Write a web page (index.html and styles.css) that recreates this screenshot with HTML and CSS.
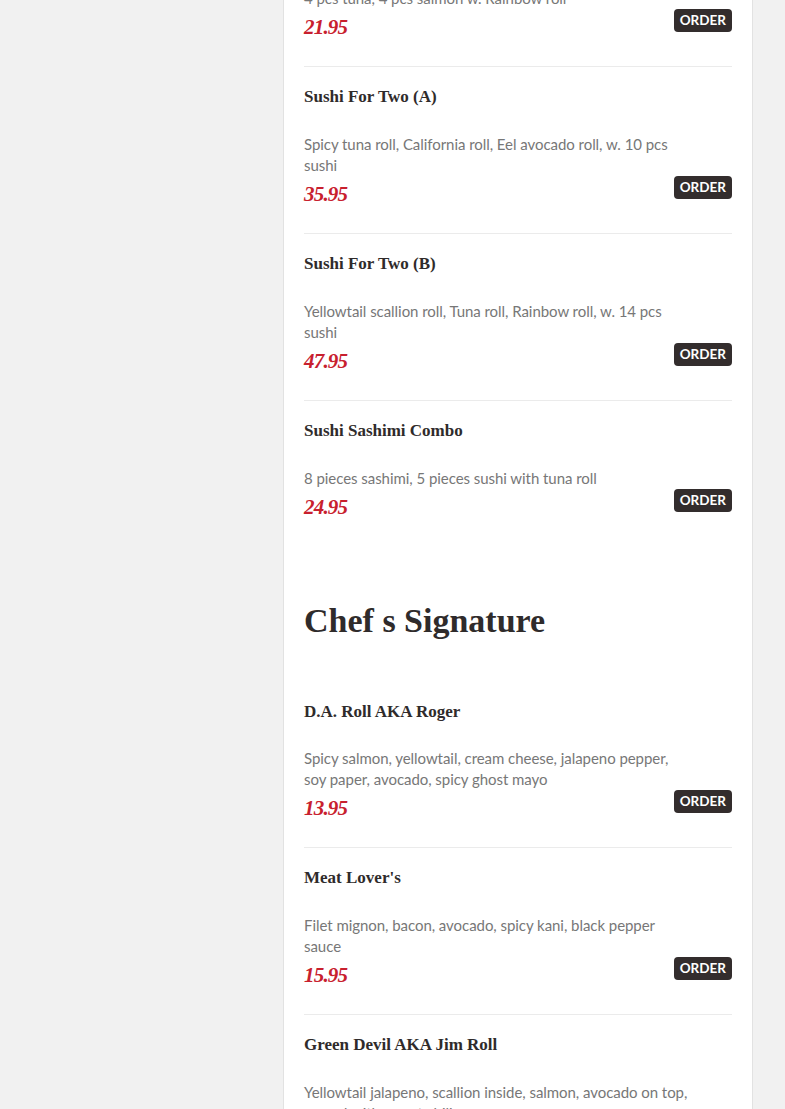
FILE: index.html
```html
<!DOCTYPE html>
<html lang="en">
<head>
<meta charset="utf-8">
<title>Menu</title>
<link rel="stylesheet" href="styles.css">
</head>
<body>
<div class="layout">
  <aside class="sidebar"></aside>
  <main class="card">
    <section class="section">
      <div class="item">
        <p class="desc">4 pcs tuna, 4 pcs salmon w. Rainbow roll</p>
        <div class="price-row"><span class="price">21.95</span><button class="order">ORDER</button></div>
      </div>
      <div class="item">
        <h3 class="title">Sushi For Two (A)</h3>
        <p class="desc">Spicy tuna roll, California roll, Eel avocado roll, w. 10 pcs sushi</p>
        <div class="price-row"><span class="price">35.95</span><button class="order">ORDER</button></div>
      </div>
      <div class="item">
        <h3 class="title">Sushi For Two (B)</h3>
        <p class="desc">Yellowtail scallion roll, Tuna roll, Rainbow roll, w. 14 pcs sushi</p>
        <div class="price-row"><span class="price">47.95</span><button class="order">ORDER</button></div>
      </div>
      <div class="item">
        <h3 class="title">Sushi Sashimi Combo</h3>
        <p class="desc">8 pieces sashimi, 5 pieces sushi with tuna roll</p>
        <div class="price-row"><span class="price">24.95</span><button class="order">ORDER</button></div>
      </div>
    </section>
    <section class="section">
      <h2 class="section-title">Chef s Signature</h2>
      <div class="item">
        <h3 class="title">D.A. Roll AKA Roger</h3>
        <p class="desc">Spicy salmon, yellowtail, cream cheese, jalapeno pepper, soy paper, avocado, spicy ghost mayo</p>
        <div class="price-row"><span class="price">13.95</span><button class="order">ORDER</button></div>
      </div>
      <div class="item">
        <h3 class="title">Meat Lover's</h3>
        <p class="desc">Filet mignon, bacon, avocado, spicy kani, black pepper sauce</p>
        <div class="price-row"><span class="price">15.95</span><button class="order">ORDER</button></div>
      </div>
      <div class="item">
        <h3 class="title">Green Devil AKA Jim Roll</h3>
        <p class="desc">Yellowtail jalapeno, scallion inside, salmon, avocado on top, served with sweet chili</p>
        <div class="price-row"><span class="price">16.95</span><button class="order">ORDER</button></div>
      </div>
    </section>
  </main>
</div>
</body>
</html>
```

FILE: styles.css
```css
html, body {
  margin: 0;
  padding: 0;
  background: #f1f1f1;
}
body {
  font-family: Lato, "Liberation Sans", sans-serif;
  overflow: hidden;
  height: 1109px;
}
.layout {
  display: grid;
  grid-template-columns: 283px 470px;
  align-items: start;
}
.card {
  background: #ffffff;
  border-left: 1px solid #e2e2e2;
  border-right: 1px solid #e2e2e2;
  padding: 0 20px;
  margin-top: -32px;
  min-height: 1300px;
}
.item {
  border-top: 1px solid #ebebeb;
  padding: 18px 0 27px;
}
.item:first-child,
.section-title + .item {
  border-top: none;
  padding-top: 20px;
}
.title {
  margin: 0 0 25px;
  font-family: "Liberation Serif", "DejaVu Serif", serif;
  font-weight: bold;
  font-size: 17px;
  line-height: 24px;
  color: #2f2b2b;
}
.section-title + .item .title {
  margin-bottom: 24px;
}
.desc {
  margin: 0;
  max-width: 388px;
  font-size: 15px;
  line-height: 21px;
  color: #777777;
  letter-spacing: -0.05px;
}
.price-row {
  display: flex;
  justify-content: space-between;
  align-items: flex-start;
  margin-top: 6px;
  height: 24px;
}
.price {
  font-family: "Liberation Serif", serif;
  font-style: italic;
  font-weight: bold;
  font-size: 21px;
  line-height: 24px;
  color: #c8202e;
  letter-spacing: -0.8px;
}
.order {
  margin-top: -6px;
  height: 23px;
  padding: 0 6px;
  border: none;
  border-radius: 4px;
  background: #332d2d;
  color: #ffffff;
  font-family: Lato, "Liberation Sans", sans-serif;
  font-weight: bold;
  font-size: 13.5px;
  line-height: 23px;
  cursor: pointer;
}
.section-title {
  margin: 55px 0 39px;
  font-family: "Liberation Serif", "DejaVu Serif", serif;
  font-weight: bold;
  font-size: 34px;
  line-height: 40px;
  color: #2f2b2b;
}
```
